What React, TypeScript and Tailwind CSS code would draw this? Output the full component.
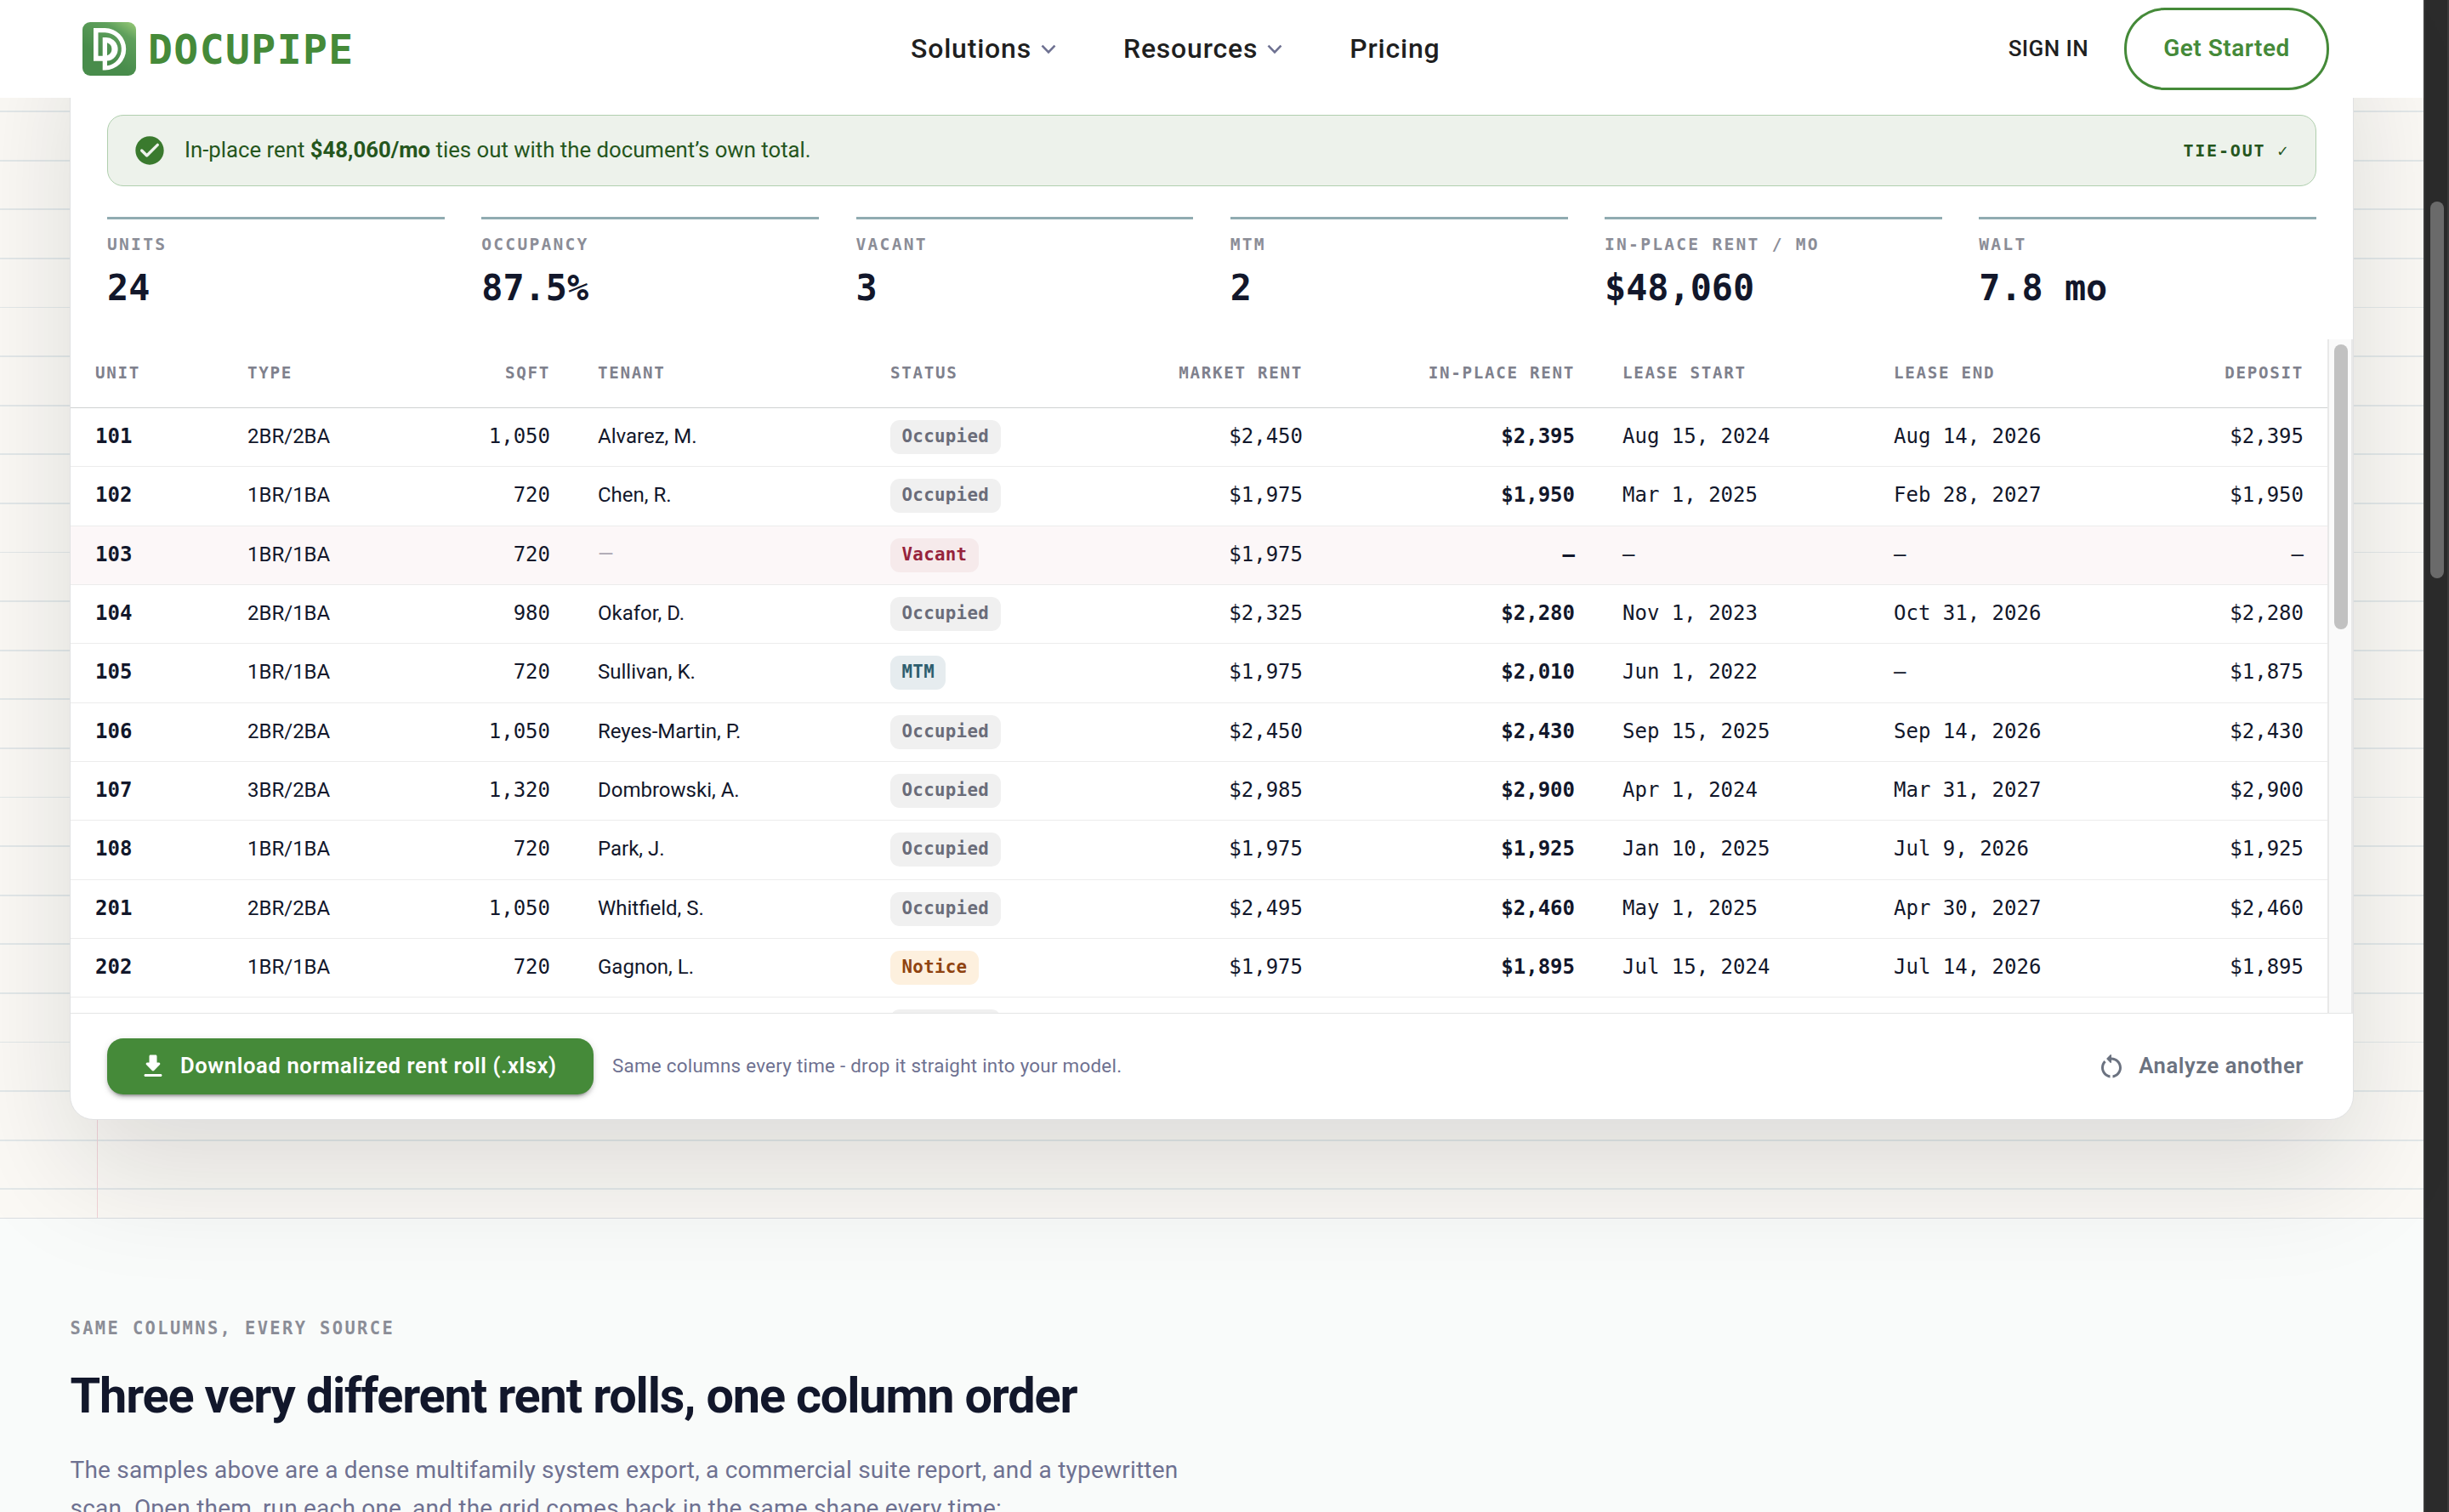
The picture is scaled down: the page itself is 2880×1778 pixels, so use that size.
import React from 'react';
import clsx from 'clsx';

type Status = 'Occupied' | 'Vacant' | 'MTM' | 'Notice';

interface RentRow {
  unit: string;
  type: string;
  sqft: string;
  tenant: string | null;
  status: Status;
  market: string;
  inPlace: string;
  start: string;
  end: string;
  deposit: string;
}

const NAV_ITEMS = [
  { label: 'Solutions', menu: true },
  { label: 'Resources', menu: true },
  { label: 'Pricing', menu: false },
];

const KPIS = [
  { label: 'UNITS', value: '24' },
  { label: 'OCCUPANCY', value: '87.5%' },
  { label: 'VACANT', value: '3' },
  { label: 'MTM', value: '2' },
  { label: 'IN-PLACE RENT / MO', value: '$48,060' },
  { label: 'WALT', value: '7.8 mo' },
];

const COLUMNS = [
  { label: 'UNIT', right: false },
  { label: 'TYPE', right: false },
  { label: 'SQFT', right: true },
  { label: 'TENANT', right: false },
  { label: 'STATUS', right: false },
  { label: 'MARKET RENT', right: true },
  { label: 'IN-PLACE RENT', right: true },
  { label: 'LEASE START', right: false },
  { label: 'LEASE END', right: false },
  { label: 'DEPOSIT', right: true },
];

const ROWS: RentRow[] = [
  { unit: '101', type: '2BR/2BA', sqft: '1,050', tenant: 'Alvarez, M.', status: 'Occupied', market: '$2,450', inPlace: '$2,395', start: 'Aug 15, 2024', end: 'Aug 14, 2026', deposit: '$2,395' },
  { unit: '102', type: '1BR/1BA', sqft: '720', tenant: 'Chen, R.', status: 'Occupied', market: '$1,975', inPlace: '$1,950', start: 'Mar 1, 2025', end: 'Feb 28, 2027', deposit: '$1,950' },
  { unit: '103', type: '1BR/1BA', sqft: '720', tenant: null, status: 'Vacant', market: '$1,975', inPlace: '—', start: '—', end: '—', deposit: '—' },
  { unit: '104', type: '2BR/1BA', sqft: '980', tenant: 'Okafor, D.', status: 'Occupied', market: '$2,325', inPlace: '$2,280', start: 'Nov 1, 2023', end: 'Oct 31, 2026', deposit: '$2,280' },
  { unit: '105', type: '1BR/1BA', sqft: '720', tenant: 'Sullivan, K.', status: 'MTM', market: '$1,975', inPlace: '$2,010', start: 'Jun 1, 2022', end: '—', deposit: '$1,875' },
  { unit: '106', type: '2BR/2BA', sqft: '1,050', tenant: 'Reyes-Martin, P.', status: 'Occupied', market: '$2,450', inPlace: '$2,430', start: 'Sep 15, 2025', end: 'Sep 14, 2026', deposit: '$2,430' },
  { unit: '107', type: '3BR/2BA', sqft: '1,320', tenant: 'Dombrowski, A.', status: 'Occupied', market: '$2,985', inPlace: '$2,900', start: 'Apr 1, 2024', end: 'Mar 31, 2027', deposit: '$2,900' },
  { unit: '108', type: '1BR/1BA', sqft: '720', tenant: 'Park, J.', status: 'Occupied', market: '$1,975', inPlace: '$1,925', start: 'Jan 10, 2025', end: 'Jul 9, 2026', deposit: '$1,925' },
  { unit: '201', type: '2BR/2BA', sqft: '1,050', tenant: 'Whitfield, S.', status: 'Occupied', market: '$2,495', inPlace: '$2,460', start: 'May 1, 2025', end: 'Apr 30, 2027', deposit: '$2,460' },
  { unit: '202', type: '1BR/1BA', sqft: '720', tenant: 'Gagnon, L.', status: 'Notice', market: '$1,975', inPlace: '$1,895', start: 'Jul 15, 2024', end: 'Jul 14, 2026', deposit: '$1,895' },
];

const BADGE: Record<Status, string> = {
  Occupied: 'bg-[#f0f0f0] text-[#6a6c79]',
  Vacant: 'bg-[#f6eaeb] text-[#96233c]',
  MTM: 'bg-[#e6ecef] text-[#2d5e6e]',
  Notice: 'bg-[#fdf0de] text-[#8f4310]',
};

const MONO = "font-['DejaVu_Sans_Mono','Liberation_Mono',monospace]";
const GRID = 'grid grid-cols-[179px_212px_200px_344px_241px_300px_320px_319px_301px_237px] pl-px';

const Logo: React.FC = () => (
  <svg viewBox="0 0 63 63" className="size-[63px]">
    <defs>
      <linearGradient id="logo-bg" x1="1" y1="0" x2="0.55" y2="0.75">
        <stop offset="0" stopColor="#9acb78" />
        <stop offset="0.35" stopColor="#5fa05c" />
        <stop offset="1" stopColor="#488c4b" />
      </linearGradient>
    </defs>
    <rect width="63" height="63" rx="9" fill="url(#logo-bg)" />
    <path
      fill="#fff"
      fillRule="evenodd"
      d="M13 7H26.5A24.7 24.7 0 0 1 26.5 56.4H23.7V45.7H13ZM18.5 12.2V39.7H23.7V18H26.5A13.8 13.8 0 0 1 29 45.6V51.2A19.6 19.6 0 0 0 26.5 12.2ZM29 24.2V39.2A7.9 7.9 0 0 0 29 24.2Z"
    />
  </svg>
);

const Chevron: React.FC = () => (
  <svg viewBox="0 0 18 12" className="mt-0.5 h-3 w-[18px]" fill="none" stroke="#6e7191" strokeWidth="2.6">
    <path d="M1.5 1.6 9 9.4l7.5-7.8" />
  </svg>
);

const CheckIcon: React.FC = () => (
  <svg viewBox="0 0 24 24" className="size-10 shrink-0" fill="#3a7a2e">
    <path d="M12 2C6.48 2 2 6.48 2 12s4.48 10 10 10 10-4.48 10-10S17.52 2 12 2zM9.29 16.29 5.7 12.7a.996.996 0 1 1 1.41-1.41L10 14.17l6.88-6.88a.996.996 0 1 1 1.41 1.41l-7.59 7.59c-.38.39-1.02.39-1.41 0z" />
  </svg>
);

const DownloadIcon: React.FC = () => (
  <svg viewBox="0 0 24 24" className="size-9" fill="currentColor">
    <path d="M16.59 9H15V4c0-.55-.45-1-1-1h-4c-.55 0-1 .45-1 1v5H7.41c-.89 0-1.34 1.08-.71 1.71l4.59 4.59c.39.39 1.02.39 1.41 0l4.59-4.59c.63-.63.19-1.71-.7-1.71zM5 19c0 .55.45 1 1 1h12c.55 0 1-.45 1-1s-.45-1-1-1H6c-.55 0-1 .45-1 1z" />
  </svg>
);

const RestartIcon: React.FC = () => (
  <svg viewBox="0 0 24 24" className="size-9" fill="currentColor">
    <path d="M12 5V3.2c0-.45-.54-.67-.85-.35l-2.8 2.79c-.2.2-.2.51 0 .71l2.79 2.79c.32.31.86.09.86-.36V7c3.31 0 6 2.69 6 6 0 2.97-2.17 5.43-5 5.91v2.02c3.95-.49 7-3.85 7-7.93 0-4.42-3.58-8-8-8z" />
    <path d="M6 13c0-1.65.67-3.15 1.76-4.24L6.34 7.34C4.9 8.79 4 10.79 4 13c0 4.08 3.05 7.44 7 7.93v-2.02c-2.83-.48-5-2.94-5-5.91z" />
  </svg>
);

const Header: React.FC = () => (
  <header className="relative z-20 flex h-[115px] items-center bg-white">
    <div className="flex w-[1071px] items-center pl-[97px]">
      <Logo />
      <span className={clsx(MONO, 'ml-[14px] text-[48px] leading-none font-bold tracking-[0.03em] text-[#458a39]')}>
        DOCUPIPE
      </span>
    </div>
    <nav className="flex items-center pb-0.5 text-[32px] font-medium tracking-[0.8px] text-[#1f1f1f]">
      {NAV_ITEMS.map((item) => (
        <a key={item.label} className="mr-[79px] flex items-center gap-[11px]">
          {item.label}
          {item.menu && <Chevron />}
        </a>
      ))}
    </nav>
    <div className="ml-auto flex items-center pr-[111px]">
      <a className="text-[26px] font-medium tracking-[0.4px] text-[#1f1f1f]">SIGN IN</a>
      <button className="ml-[42px] h-[97px] w-[241px] rounded-[48px] border-[3px] border-[#458a39] pb-0.5 text-[28px] font-semibold tracking-[0.5px] text-[#458a39]">
        Get Started
      </button>
    </div>
  </header>
);

const TieOutBanner: React.FC = () => (
  <div className="mx-[43px] flex h-[84px] items-center rounded-[19px] border border-[#b0cfae] bg-[#edf2eb] pr-[31px] pl-[29px] text-[#25561d]">
    <CheckIcon />
    <p className="ml-[21px] pb-px text-[25.75px] whitespace-pre">
      In-place rent <b className="font-bold">$48,060/mo</b> ties out with the document’s own total.
    </p>
    <span className={clsx(MONO, 'ml-auto text-[20px] font-bold tracking-[1.8px]')}>TIE-OUT ✓</span>
  </div>
);

const KpiStrip: React.FC = () => (
  <div className="mx-[43px] mt-9 grid grid-cols-6 gap-[43.5px]">
    {KPIS.map((kpi) => (
      <div key={kpi.label} className={clsx(MONO, 'h-[144px] border-t-[3px] border-[#90abb1] pt-[15px]')}>
        <div className="text-[19.6px] leading-[30px] font-bold tracking-[2.25px] text-[#8b8d97]">{kpi.label}</div>
        <div className="mt-[11px] text-[41.8px] leading-[50px] font-bold text-[#12172b]">{kpi.value}</div>
      </div>
    ))}
  </div>
);

const TableRow: React.FC<{ row: RentRow }> = ({ row }) => {
  const mono = clsx(MONO, 'px-7');
  return (
    <div
      className={clsx(
        GRID,
        'h-[69.33px] items-center border-b border-[#ececec] pb-[2px] text-[24px] text-[#12172b]',
        row.status === 'Vacant' && 'bg-[#fcf7f8]',
      )}
    >
      <div className={clsx(mono, 'font-bold')}>{row.unit}</div>
      <div className="px-7">{row.type}</div>
      <div className={clsx(mono, 'text-right')}>{row.sqft}</div>
      <div className="px-7">{row.tenant ?? <span className="text-[#aaa5b0]">—</span>}</div>
      <div className="flex px-7 pt-[2px]">
        <span
          className={clsx(
            MONO,
            'h-10 rounded-[11px] px-[13.5px] text-[20.8px] leading-[39px] font-bold tracking-[0.3px]',
            BADGE[row.status],
          )}
        >
          {row.status}
        </span>
      </div>
      <div className={clsx(mono, 'text-right')}>{row.market}</div>
      <div className={clsx(mono, 'text-right font-bold')}>{row.inPlace}</div>
      <div className={mono}>{row.start}</div>
      <div className={mono}>{row.end}</div>
      <div className={clsx(mono, 'text-right')}>{row.deposit}</div>
    </div>
  );
};

const RentTable: React.FC = () => (
  <div className="flex h-[792px] overflow-hidden">
    <div className="w-[2654px] shrink-0">
      <div
        className={clsx(
          GRID,
          MONO,
          'h-[81px] items-center border-b border-[#cfd2d2] text-[19.2px] font-bold tracking-[1.7px] text-[#7f818d]',
        )}
      >
        {COLUMNS.map((col) => (
          <div key={col.label} className={clsx('px-7', col.right && 'text-right')}>
            {col.label}
          </div>
        ))}
      </div>
      {ROWS.map((row) => (
        <TableRow key={row.unit} row={row} />
      ))}
      {/* next row is only peeking in above the footer */}
      <div className={clsx(GRID, 'pt-[14px]')}>
        <div className="col-start-5 px-7">
          <div className="h-10 w-[130px] rounded-[11px] bg-[#f0f0f0]" />
        </div>
      </div>
    </div>
    <div className="w-[30px] border-x-2 border-[#e8e8e8] bg-[#fafafa] pt-1.5 pl-[6px]">
      <div className="h-[335px] w-4 rounded-full bg-[#c1c1c1]" />
    </div>
  </div>
);

const CardFooter: React.FC = () => (
  <div className="flex h-[125px] items-center border-t border-[#e4e5e5] pr-[58px] pl-[43px]">
    <button className="flex h-[66px] w-[572px] items-center rounded-[19px] bg-[#458a39] pl-[36px] text-[25.6px] font-semibold tracking-[0.6px] text-white shadow-[0_6px_2px_-4px_rgba(0,0,0,0.2),0_4px_4px_0_rgba(0,0,0,0.14),0_2px_10px_0_rgba(0,0,0,0.12)]">
      <DownloadIcon />
      <span className="ml-[14px] pb-px">Download normalized rent roll (.xlsx)</span>
    </button>
    <span className="ml-[22px] text-[22.4px] tracking-[0.25px] text-[#6e7191]">
      Same columns every time - drop it straight into your model.
    </span>
    <button className="ml-auto flex items-center gap-[14px] text-[25.6px] font-semibold tracking-[0.55px] text-[#6b7280]">
      <RestartIcon />
      <span className="pb-px">Analyze another</span>
    </button>
  </div>
);

const App: React.FC = () => {
  return (
    <div className="flex h-[1778px] w-[2880px] overflow-hidden bg-white font-['Roboto',sans-serif]">
      <div className="w-[2850px]">
        <Header />
        <section className="-mt-[115px] h-[1433px] border-b border-[#dadde1] bg-[#fbf9f5] bg-[linear-gradient(to_right,transparent_114px,#f2d3d8_114px,#f2d3d8_115px,transparent_115px),repeating-linear-gradient(to_bottom,transparent_0px,transparent_15px,#e3e8e9_15px,#e3e8e9_16.7px,transparent_16.7px,transparent_57.6px)] px-[82px]">
          <div className="relative z-10 h-[1317px] rounded-b-[28px] border border-[#e0e1e2] bg-white pt-[134px] shadow-[0_60px_140px_rgba(17,20,30,0.13)]">
            <TieOutBanner />
            <KpiStrip />
            <RentTable />
            <CardFooter />
          </div>
        </section>
        <section className="h-[345px] bg-[#f9fbfa] px-[82.5px] pt-[114px]">
          <div className={clsx(MONO, 'text-[20.4px] leading-[30px] font-bold tracking-[2.4px] text-[#8b8d97]')}>
            SAME COLUMNS, EVERY SOURCE
          </div>
          <h2 className="mt-[29px] text-[57.6px] leading-[72px] font-bold tracking-[-0.02em] text-[#12172b]">
            Three very different rent rolls, one column order
          </h2>
          <p className="mt-[29px] text-[28px] leading-[44.8px] tracking-[0.21px] text-[#6e7191]">
            The samples above are a dense multifamily system export, a commercial suite report, and a typewritten
            <br />
            scan. Open them, run each one, and the grid comes back in the same shape every time:
          </p>
        </section>
      </div>
      {/* window scrollbar */}
      <div className="w-[30px] border-x-2 border-[#3a3a3a] bg-[#2b2b2b] pt-[237px] pl-[6px]">
        <div className="h-[443px] w-4 rounded-full bg-[#6b6b6b]" />
      </div>
    </div>
  );
};

export default App;
